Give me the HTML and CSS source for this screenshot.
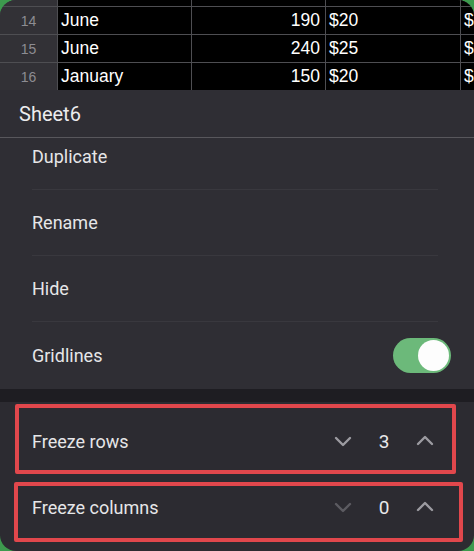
FILE: index.html
```html
<!DOCTYPE html>
<html lang="en">
<head>
  <meta charset="UTF-8">
  <meta name="viewport" content="width=device-width, initial-scale=1.0">
  <title>Sheet6</title>
  <link rel="stylesheet" href="styles.css">
</head>
<body>
  <div class="screen">
    <div class="sheet">
      <div class="row cut">
        <div class="head"></div>
        <div class="cell"></div>
        <div class="cell num"></div>
        <div class="cell"></div>
        <div class="cell"></div>
      </div>
      <div class="row">
        <div class="head">14</div>
        <div class="cell">June</div>
        <div class="cell num">190</div>
        <div class="cell">$20</div>
        <div class="cell">$</div>
      </div>
      <div class="row">
        <div class="head">15</div>
        <div class="cell">June</div>
        <div class="cell num">240</div>
        <div class="cell">$25</div>
        <div class="cell">$</div>
      </div>
      <div class="row">
        <div class="head">16</div>
        <div class="cell">January</div>
        <div class="cell num">150</div>
        <div class="cell">$20</div>
        <div class="cell">$</div>
      </div>
    </div>

    <div class="panel">
      <div class="title">Sheet6</div>
      <div class="menu-wrap">
        <ul class="menu">
          <li>Duplicate</li>
          <li>Rename</li>
          <li>Hide</li>
          <li class="last">
            Gridlines
            <span class="toggle"><span class="knob"></span></span>
          </li>
        </ul>
      </div>
    </div>

    <div class="strip"></div>

    <div class="freeze">
      <div class="freeze-row mark-rows">
        <span class="label">Freeze rows</span>
        <div class="stepper">
          <svg class="chev" width="18" height="12" viewBox="0 0 18 12"><path d="M2 3l7 7 7-7" fill="none" stroke="currentColor" stroke-width="2.4" stroke-linecap="round" stroke-linejoin="round"/></svg>
          <span class="count">3</span>
          <svg class="chev" width="18" height="12" viewBox="0 0 18 12"><path d="M2 9l7-7 7 7" fill="none" stroke="currentColor" stroke-width="2.4" stroke-linecap="round" stroke-linejoin="round"/></svg>
        </div>
      </div>
      <div class="freeze-row mark-cols">
        <span class="label">Freeze columns</span>
        <div class="stepper">
          <svg class="chev off" width="18" height="12" viewBox="0 0 18 12"><path d="M2 3l7 7 7-7" fill="none" stroke="currentColor" stroke-width="2.4" stroke-linecap="round" stroke-linejoin="round"/></svg>
          <span class="count">0</span>
          <svg class="chev" width="18" height="12" viewBox="0 0 18 12"><path d="M2 9l7-7 7 7" fill="none" stroke="currentColor" stroke-width="2.4" stroke-linecap="round" stroke-linejoin="round"/></svg>
        </div>
      </div>
    </div>
  </div>
</body>
</html>
```

FILE: styles.css
```css
*{
  margin: 0;
  padding: 0;
  box-sizing: border-box;
}
body{
  width: 474px;
  height: 551px;
  overflow: hidden;
  background-color: #3d9a4e;
  font-family: Roboto, "Liberation Sans", sans-serif;
}
.screen{
  height: 551px;
  border-radius: 16px;
  overflow: hidden;
  background-color: #2c2b31;
}

/* spreadsheet */
.sheet{
  display: flex;
  flex-direction: column;
  gap: 1px;
  background-color: #4e4e52;
}
.row{
  display: grid;
  grid-template-columns: 57px 133px 133px 134px 1fr;
  gap: 1px;
  height: 27px;
}
.row.cut{
  height: 6px;
}
.head{
  background-color: #323136;
  color: #8d8c92;
  font-family: "Liberation Sans", sans-serif;
  font-size: 14px;
  display: flex;
  align-items: center;
  justify-content: center;
}
.cell{
  background-color: #000;
  color: #fff;
  font-family: "Liberation Sans", sans-serif;
  font-size: 17.5px;
  line-height: 27px;
  padding: 0 3px;
  overflow: hidden;
  white-space: nowrap;
}
.cell.num{
  text-align: right;
  padding-right: 5px;
}

/* sheet menu */
.panel{
  background-color: #2f2e34;
}
.title{
  height: 48px;
  line-height: 48px;
  padding-left: 19px;
  color: #ececee;
  font-size: 20px;
  border-bottom: 1px solid #58575c;
}
.menu-wrap{
  height: 251px;
  overflow: hidden;
}
.menu{
  list-style: none;
  margin-top: -14px;
  padding: 0 36px 0 32px;
}
.menu li{
  height: 66px;
  display: flex;
  align-items: center;
  justify-content: space-between;
  color: #e6e6e8;
  font-size: 18px;
  border-bottom: 1px solid #39383e;
}
.menu li.last{
  border-bottom: none;
  padding-top: 1px;
}
.toggle{
  width: 58px;
  height: 35px;
  border-radius: 18px;
  background-color: #6cb97a;
  display: flex;
  align-items: center;
  justify-content: flex-end;
  padding-right: 2px;
  margin-right: -13px;
}
.knob{
  width: 31px;
  height: 31px;
  border-radius: 50%;
  background-color: #fdfdfd;
}
.strip{
  height: 13px;
  background-color: #1e1d22;
}

/* freeze section */
.freeze{
  padding-top: 6px;
}
.freeze-row{
  position: relative;
  height: 66px;
  display: flex;
  align-items: center;
  justify-content: space-between;
  padding: 0 40px 0 32px;
  color: #e6e6e8;
  font-size: 18px;
}
.stepper{
  display: flex;
  align-items: center;
}
.chev{
  color: #9c9ba1;
}
.chev.off{
  color: #5c5b61;
}
.count{
  width: 64px;
  text-align: center;
  font-size: 19px;
  color: #e8e8ea;
}
.mark-rows::after,
.mark-cols::after{
  content: "";
  position: absolute;
  border: 4px solid #e1474c;
  border-radius: 2px;
}
.mark-rows::after{
  top: -4px;
  bottom: 0;
  left: 15px;
  right: 18px;
}
.mark-cols::after{
  top: 8px;
  bottom: -2px;
  left: 14px;
  right: 11px;
}
```
